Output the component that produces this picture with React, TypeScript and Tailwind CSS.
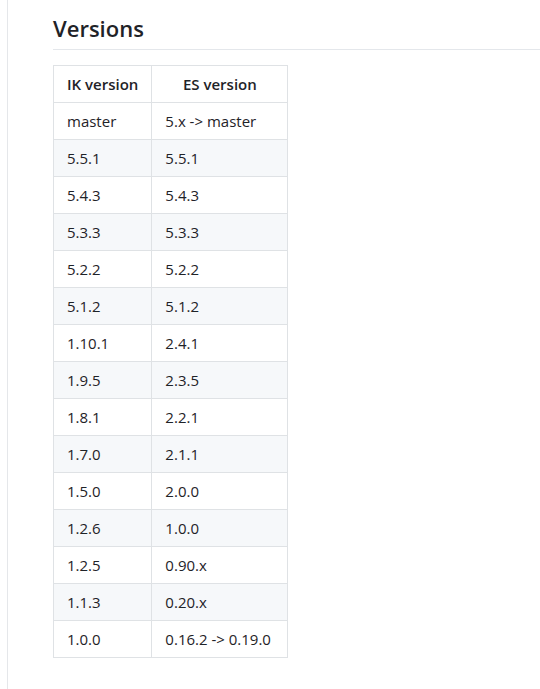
import React from "react";

const rows: [string, string][] = [
  ["master", "5.x -> master"],
  ["5.5.1", "5.5.1"],
  ["5.4.3", "5.4.3"],
  ["5.3.3", "5.3.3"],
  ["5.2.2", "5.2.2"],
  ["5.1.2", "5.1.2"],
  ["1.10.1", "2.4.1"],
  ["1.9.5", "2.3.5"],
  ["1.8.1", "2.2.1"],
  ["1.7.0", "2.1.1"],
  ["1.5.0", "2.0.0"],
  ["1.2.6", "1.0.0"],
  ["1.2.5", "0.90.x"],
  ["1.1.3", "0.20.x"],
  ["1.0.0", "0.16.2 -> 0.19.0"],
];

export default function App() {
  return (
    <div className="min-h-[689px] bg-white pl-[7px] font-['Open_Sans',sans-serif] text-[#1f2328]">
      <div className="min-h-[689px] border-l border-[#e5e7ea] pl-[45px] pt-[11px]">
        {/* HEADING */}
        <h2 className="border-b border-[#e4e7eb] pb-[3px] text-[22px] font-semibold leading-[35px]">
          Versions
        </h2>

        {/* TABLE */}
        <table className="mt-[15px] border-collapse whitespace-nowrap text-[15px] leading-6">
          <thead>
            <tr>
              <th className="w-[98px] border border-[#dfe2e5] px-[13px] py-[6px] text-center font-semibold">
                IK version
              </th>
              <th className="w-[136px] border border-[#dfe2e5] px-[13px] py-[6px] text-center font-semibold">
                ES version
              </th>
            </tr>
          </thead>
          <tbody>
            {rows.map(([ik, es], i) => (
              <tr key={ik} className={i % 2 === 1 ? "bg-[#f6f8fa]" : "bg-white"}>
                <td className="border border-[#dfe2e5] px-[13px] py-[6px]">{ik}</td>
                <td className="border border-[#dfe2e5] px-[13px] py-[6px]">{es}</td>
              </tr>
            ))}
          </tbody>
        </table>
      </div>
    </div>
  );
}
